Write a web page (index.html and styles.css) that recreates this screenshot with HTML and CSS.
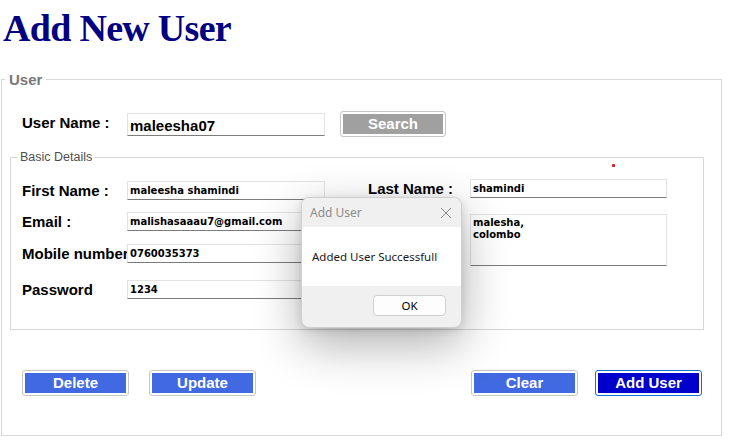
FILE: index.html
```html
<!DOCTYPE html>
<html lang="en">
<head>
<meta charset="utf-8">
<title>Add New User</title>
<link rel="stylesheet" href="styles.css">
</head>
<body>
<h1 class="title">Add New User</h1>
<fieldset class="user-box">
  <legend class="legend-main">User</legend>
  <div class="search-row">
    <label class="lbl lbl-user" for="uname">User Name :</label>
    <input class="field field-big" id="uname" type="text" value="maleesha07">
    <button class="btn btn-gray" type="button">Search</button>
  </div>
  <fieldset class="details">
    <legend class="legend-sub">Basic Details</legend>
    <span class="req-dot"></span>
    <div class="cols">
      <div class="col col-left">
        <div class="row row-1"><label class="lbl lbl-left">First Name :</label><input class="field" type="text" value="maleesha shamindi"></div>
        <div class="row row-2"><label class="lbl lbl-left">Email :</label><input class="field" type="text" value="malishasaaau7@gmail.com"></div>
        <div class="row row-3"><label class="lbl lbl-left">Mobile number</label><input class="field" type="text" value="0760035373"></div>
        <div class="row row-4"><label class="lbl lbl-left">Password</label><input class="field" type="text" value="1234"></div>
      </div>
      <div class="col col-right">
        <div class="row row-r1"><label class="lbl lbl-right">Last Name :</label><input class="field field-r" type="text" value="shamindi"></div>
        <div class="row row-r2"><span class="lbl lbl-right"></span><textarea class="field area">malesha,
colombo</textarea></div>
      </div>
    </div>
  </fieldset>
  <div class="actions">
    <div class="group">
      <button class="btn btn-blue" type="button">Delete</button>
      <button class="btn btn-blue" type="button">Update</button>
    </div>
    <div class="group">
      <button class="btn btn-blue" type="button">Clear</button>
      <button class="btn btn-dark" type="button">Add User</button>
    </div>
  </div>
</fieldset>

<div class="dialog">
  <div class="dlg-head">
    <span class="dlg-title">Add User</span>
    <svg class="dlg-close" width="12" height="12" viewBox="0 0 12 12"><path d="M1 1L11 11M11 1L1 11" stroke="#8a8a8a" stroke-width="1" fill="none"/></svg>
  </div>
  <div class="dlg-body">Added User Successfull</div>
  <div class="dlg-foot"><button class="dlg-ok" type="button">OK</button></div>
</div>
</body>
</html>
```
FILE: styles.css
```css
html, body {
  margin: 0;
  padding: 0;
  background: #ffffff;
}
body {
  width: 730px;
  height: 448px;
  position: relative;
  overflow: hidden;
  font-family: "Liberation Sans", Arial, sans-serif;
}
.title {
  margin: 0;
  padding: 4px 0 0 3px;
  height: 67px;
  line-height: 48px;
  font-family: "Liberation Serif", "Times New Roman", serif;
  font-weight: bold;
  font-size: 38px;
  letter-spacing: -0.7px;
  color: #000080;
}
.user-box {
  margin: 0 8px 0 1px;
  padding: 0 0 39px 0;
  border: 1px solid #d7d7d7;
  min-width: 0;
}
.legend-main {
  margin-left: 3px;
  padding: 0 4px;
  font-size: 15px;
  font-weight: bold;
  line-height: 17px;
  color: #787878;
}
.lbl {
  font-weight: bold;
  font-size: 15px;
  color: #000;
  flex: none;
  white-space: nowrap;
}
.search-row {
  display: flex;
  align-items: center;
  margin-top: 23px;
  padding-left: 20px;
  height: 26px;
}
.lbl-user { width: 105px; margin-bottom: 4px; }
.field {
  box-sizing: border-box;
  margin: 0;
  border: 1px solid #e3e3e3;
  border-bottom: 1px solid #7c7c7c;
  background: #fff;
  outline: none;
  color: #000;
  font-family: "DejaVu Sans", Verdana, sans-serif;
  font-weight: bold;
  font-size: 10px;
  padding: 0 2px;
  width: 198px;
  height: 19px;
  position: relative;
}
.field-big {
  height: 23px;
  font-family: "Liberation Sans", Arial, sans-serif;
  font-size: 15px;
  padding-top: 2px;
}
.btn {
  box-sizing: border-box;
  width: 107px;
  height: 26px;
  margin: 0;
  padding: 2px;
  border: 1px solid #c6c6c6;
  border-radius: 3px;
  background-clip: content-box;
  font-family: "Liberation Sans", Arial, sans-serif;
  font-weight: bold;
  font-size: 15px;
  color: #fff;
  line-height: 20px;
}
.btn-gray {
  margin-left: 15px;
  width: 106px;
  background-color: #a0a0a0;
}
.btn-blue { background-color: #4169e1; }
.btn-dark {
  background-color: #0000cd;
  border-color: #0a74d6;
}
.details {
  position: relative;
  margin: 13px 17px 0 8px;
  padding: 0 0 30px 11px;
  border: 1px solid #d7d7d7;
  min-width: 0;
}
.legend-sub {
  margin-left: -4px;
  padding: 0 2px;
  font-size: 12.5px;
  line-height: 14px;
  color: #4f4f4f;
}
.req-dot {
  position: absolute;
  left: 601px;
  top: 0;
  width: 3px;
  height: 3px;
  background: #e8141e;
  border-radius: 1px;
}
.cols {
  display: flex;
  align-items: flex-start;
  gap: 43px;
}
.col { display: flex; flex-direction: column; }
.row {
  display: flex;
  align-items: center;
}
.lbl-left { width: 105px; }
.lbl-right { width: 102px; }
.row-1 { margin-top: 17px; }
.row-2 { margin-top: 12px; }
.row-3 { margin-top: 13px; }
.row-4 { margin-top: 17px; }
.row-r1 { margin-top: 15px; }
.row-r2 { margin-top: 16px; align-items: flex-start; }
.field-r { width: 197px; }
.area {
  width: 197px;
  height: 52px;
  resize: none;
  padding: 2px 2px;
  line-height: 12px;
  overflow: hidden;
}
.actions {
  display: flex;
  justify-content: space-between;
  margin-top: 40px;
  padding: 0 19px 0 20px;
}
.group {
  display: flex;
  gap: 20px;
}
.group + .group { gap: 17px; }

.dialog {
  position: absolute;
  left: 301px;
  top: 197px;
  width: 161px;
  height: 131px;
  box-sizing: border-box;
  border: 1px solid #cfcfcf;
  border-radius: 8px;
  overflow: hidden;
  background: #f0f0f0;
  box-shadow: 0 16px 48px rgba(0, 0, 0, 0.32), 0 2px 8px rgba(0, 0, 0, 0.12);
  font-family: "Noto Sans", "Open Sans", sans-serif;
  font-size: 11.5px;
  display: flex;
  flex-direction: column;
}
.dlg-head {
  height: 29px;
  display: flex;
  align-items: center;
  justify-content: space-between;
  padding: 0 9px 0 8px;
  background: #f0f0f0;
}
.dlg-title { color: #8c8c8c; font-size: 12px; }
.dlg-close { display: block; }
.dlg-body {
  height: 59px;
  background: #fff;
  display: flex;
  align-items: center;
  padding-left: 10px;
  color: #1a1a1a;
}
.dlg-foot {
  flex: 1;
  display: flex;
  justify-content: flex-end;
  align-items: flex-start;
  padding: 9px 15px 0 0;
}
.dlg-ok {
  box-sizing: border-box;
  width: 73px;
  height: 21px;
  margin: 0;
  padding: 0;
  border: 1px solid #d0d0d0;
  border-radius: 4px;
  background: #fdfdfd;
  font-family: "Noto Sans", "Open Sans", sans-serif;
  font-size: 11.5px;
  color: #000;
  line-height: 19px;
}
```
